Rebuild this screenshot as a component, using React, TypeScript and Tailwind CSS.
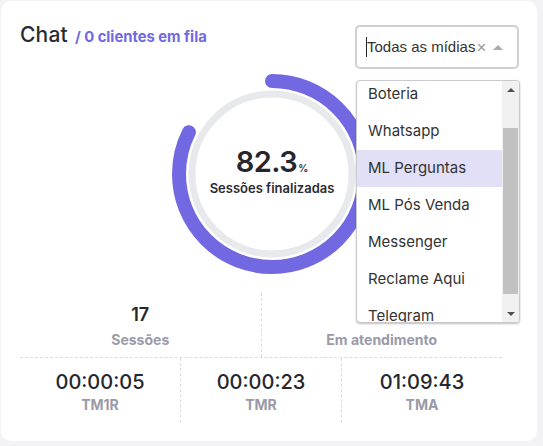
import React from 'react';

const options = ['Boteria', 'Whatsapp', 'ML Perguntas', 'ML Pós Venda', 'Messenger', 'Reclame Aqui', 'Telegram'];

const times = [
    { value: '00:00:05', label: 'TM1R' },
    { value: '00:00:23', label: 'TMR' },
    { value: '01:09:43', label: 'TMA' },
];

const Gauge: React.FC<{ percent: number }> = ({ percent }) => {
    const r = 93;
    const circ = 2 * Math.PI * r;
    return (
        <div className="relative w-[210px] h-[210px]">
            <svg width="210" height="210" viewBox="0 0 210 210">
                <circle cx="105" cy="105" r="80" fill="none" stroke="#e7e9ec" strokeWidth="7" />
                <circle
                    cx="105"
                    cy="105"
                    r={r}
                    fill="none"
                    stroke="#7268e2"
                    strokeWidth="14"
                    strokeLinecap="round"
                    strokeDasharray={`${(percent / 100) * circ} ${circ}`}
                    transform="rotate(-90 105 105)"
                />
            </svg>
            <div className="absolute inset-0 flex flex-col items-center justify-center">
                <div className="flex items-baseline leading-none mt-[-2px]">
                    <span className="text-[29px] font-semibold text-[#26262e] tracking-[-0.5px]">{percent}</span>
                    <span className="text-[10px] font-semibold text-[#26262e] ml-[1px]">%</span>
                </div>
                <span className="text-[13px] font-semibold text-[#2b2b33] mt-[3px]">Sessões finalizadas</span>
            </div>
        </div>
    );
};

export default function App() {
    return (
        <div className="w-[543px] h-[446px] bg-[#f3f3f6] p-px" style={{ fontFamily: 'Inter, "Noto Sans", sans-serif' }}>
            <div className="relative w-[536px] h-[440px] bg-white rounded-[10px] pl-[19px] pr-[18px] pt-[24px]">
                <div className="flex justify-between items-start h-[44px]">
                    <div className="flex items-baseline mt-[-6px]">
                        <span className="text-[21px] font-medium text-[#2a2a32] tracking-[0.2px]">Chat</span>
                        <span className="text-[14.8px] font-bold text-[#7268e2] ml-[7px]">/ 0 clientes em fila</span>
                    </div>
                    <div className="w-[164px] h-[44px] border-2 border-[#cfcfd4] rounded-[5px] flex items-center pl-[9px] pr-[14px]" style={{ fontFamily: '"Liberation Sans", Arial, sans-serif' }}>
                        <span className="w-px h-[20px] bg-[#222]" />
                        <span className="text-[15px] text-[#333]">Todas as mídias</span>
                        <span className="text-[17px] text-[#999] leading-none ml-[1px]">×</span>
                        <span className="ml-auto w-0 h-0 border-l-[5px] border-r-[5px] border-b-[5px] border-l-transparent border-r-transparent border-b-[#aaa]" />
                    </div>
                </div>

                <div className="ml-[147px]">
                    <Gauge percent={82.3} />
                </div>

                <div className="w-[482px] mt-[14px]">
                    <div className="flex">
                        <div className="flex-1 h-[64px] flex flex-col items-center border-r border-dashed border-[#dcdce0]">
                            <span className="text-[18px] font-semibold text-[#26262e] mt-[10px] leading-[24px]">17</span>
                            <span className="text-[14px] font-bold text-[#9a9aa8] mt-[2px]">Sessões</span>
                        </div>
                        <div className="flex-1 h-[64px] flex flex-col items-center">
                            <span className="text-[18px] font-semibold text-[#26262e] mt-[10px] leading-[24px]">&nbsp;</span>
                            <span className="text-[14px] font-bold text-[#9a9aa8] mt-[2px]">Em atendimento</span>
                        </div>
                    </div>
                    <div className="flex border-t border-dashed border-[#dcdce0]">
                        {times.map((t, i) => (
                            <div key={t.label} className={`flex-1 h-[65px] flex flex-col items-center ${i < 2 ? 'border-r border-dashed border-[#dcdce0]' : ''}`}>
                                <span className="text-[20px] font-medium text-[#26262e] mt-[11px] leading-[26px]">{t.value}</span>
                                <span className="text-[14px] font-bold text-[#9a9aa8] leading-[20px]">{t.label}</span>
                            </div>
                        ))}
                    </div>
                </div>

                {/* open select list */}
                <div className="absolute left-[355px] top-[79px] w-[164px] h-[243px] bg-white border border-[#c9c9ce] rounded-[4px] shadow-[0_1px_2px_rgba(0,0,0,0.25)] overflow-hidden flex">
                    <div className="flex-1 overflow-hidden">
                        <div className="mt-[-5px]">
                            {options.map((o) => (
                                <div key={o} className={`h-[37px] flex items-center pl-[11px] text-[15px] text-[#333] ${o === 'ML Perguntas' ? 'bg-[#e2e0f7]' : ''}`}>
                                    {o}
                                </div>
                            ))}
                        </div>
                    </div>
                    <div className="w-[17px] bg-[#f1f1f1] flex flex-col items-center">
                        <div className="h-[17px] flex items-center justify-center">
                            <span className="w-0 h-0 border-l-[4px] border-r-[4px] border-b-[4px] border-l-transparent border-r-transparent border-b-[#505050]" />
                        </div>
                        <div className="w-[15px] h-[166px] bg-[#c1c1c1] mt-[30px]" />
                        <div className="mt-auto h-[17px] flex items-center justify-center">
                            <span className="w-0 h-0 border-l-[4px] border-r-[4px] border-t-[4px] border-l-transparent border-r-transparent border-t-[#505050]" />
                        </div>
                    </div>
                </div>
            </div>
        </div>
    );
}
